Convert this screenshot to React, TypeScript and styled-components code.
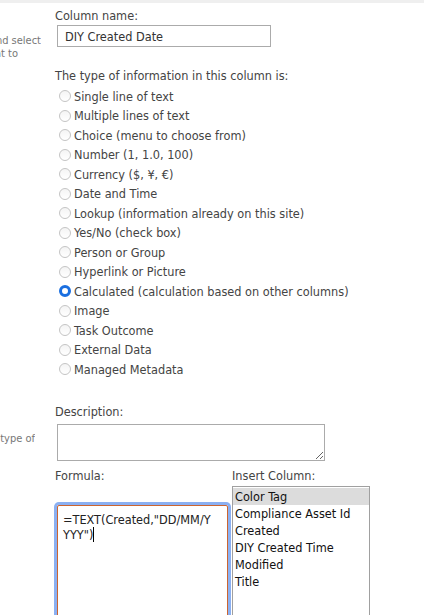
import React from 'react';
import styled, { createGlobalStyle } from 'styled-components';

const GlobalStyle = createGlobalStyle`
    html, body {
        margin: 0;
        padding: 0;
        background: #ffffff;
    }
    body {
        font-family: 'DejaVu Sans Condensed', 'DejaVu Sans', Tahoma, sans-serif;
        font-size: 12.6px;
        color: #444444;
        overflow: hidden;
    }
`;

const Page = styled.div`
    width: 424px;
    height: 615px;
    overflow: hidden;
`;
const TopBand = styled.div`
    height: 3px;
    background-color: #efefef;
`;
const Section = styled.div`
    display: grid;
    grid-template-columns: 55px 1fr;
    padding-top: ${(p: { $top: number }) => p.$top}px;
`;
const Side = styled.div`
    padding-top: ${(p: { $top: number }) => p.$top}px;
    font-size: 11px;
    line-height: 13px;
    color: #777777;
`;
const SideLine = styled.div<{ $end: number }>`
    width: ${(p) => p.$end}px;
    display: flex;
    justify-content: flex-end;
    overflow: hidden;
    white-space: nowrap;
`;
const Main = styled.div`
    display: flex;
    flex-direction: column;
`;
const Label = styled.div<{ $gap?: number }>`
    line-height: 16px;
    margin-top: ${(p) => p.$gap || 0}px;
    color: #444444;
    white-space: nowrap;
`;
const NameInput = styled.div`
    box-sizing: border-box;
    width: 214px;
    height: 22px;
    margin: 1px 0 0 2px;
    border: 1px solid #ababab;
    padding: 0 7px;
    line-height: 21px;
    color: #333333;
`;
const RadioList = styled.div`
    margin-top: 2px;
    display: flex;
    flex-direction: column;
`;
const RadioRow = styled.div`
    height: 19.5px;
    display: flex;
    align-items: center;
    white-space: nowrap;
    color: #444444;
    padding-top: 1px;
    box-sizing: border-box;
`;
const RadioDot = styled.span<{ $on?: boolean }>`
    box-sizing: border-box;
    width: 12px;
    height: 12px;
    margin: 0 3px 0 4px;
    border-radius: 50%;
    border: ${(p) => (p.$on ? '3.5px solid #1a6fe0' : '1px solid #c4c4c4')};
    background: ${(p) => (p.$on ? '#ffffff' : 'linear-gradient(#f4f4f4, #ffffff)')};
    flex: none;
`;
const DescBox = styled.textarea`
    box-sizing: border-box;
    display: block;
    width: 268px;
    height: 37px;
    margin: 4px 0 0 2px;
    border: 1px solid #ababab;
    border-radius: 0;
    padding: 2px 4px;
    font: inherit;
    outline: none;
`;
const FormulaRow = styled.div`
    margin-top: 7px;
    display: grid;
    grid-template-columns: 177px 1fr;
`;
const FormulaCol = styled.div`
    display: flex;
    flex-direction: column;
`;
const FormulaBox = styled.div`
    box-sizing: border-box;
    width: 171px;
    height: 140px;
    margin: 21px 0 0 2px;
    border: 1px solid #cc6530;
    border-radius: 2px;
    box-shadow: 0 0 0 3px #8bb0f2;
    padding: 6px 5px;
    line-height: 15px;
    color: #222222;
    white-space: pre;
`;
const Caret = styled.span`
    display: inline-block;
    width: 1px;
    height: 15px;
    vertical-align: top;
    background: #000000;
`;
const ListBox = styled.div`
    box-sizing: border-box;
    width: 138px;
    height: 150px;
    margin-top: 2px;
    border: 1px solid #a0a0a0;
    padding-top: 1px;
`;
const Option = styled.div<{ $selected?: boolean }>`
    height: 17px;
    line-height: 17px;
    padding-left: 2px;
    color: #111111;
    white-space: nowrap;
    background-color: ${(p) => (p.$selected ? '#dcdcdc' : 'transparent')};
`;

const types = [
    'Single line of text',
    'Multiple lines of text',
    'Choice (menu to choose from)',
    'Number (1, 1.0, 100)',
    'Currency ($, ¥, €)',
    'Date and Time',
    'Lookup (information already on this site)',
    'Yes/No (check box)',
    'Person or Group',
    'Hyperlink or Picture',
    'Calculated (calculation based on other columns)',
    'Image',
    'Task Outcome',
    'External Data',
    'Managed Metadata',
];

const columns = ['Color Tag', 'Compliance Asset Id', 'Created', 'DIY Created Time', 'Modified', 'Title'];

export default function App() {
    return (
        <Page>
            <GlobalStyle />
            <TopBand />
            <Section $top={0}>
                <Side $top={31}>
                    <SideLine $end={41}>Type a name for this column, and select</SideLine>
                    <SideLine $end={18}>the type of information you want to</SideLine>
                </Side>
                <Main>
                    <Label $gap={5}>Column name:</Label>
                    <NameInput>DIY Created Date</NameInput>
                    <Label $gap={21}>The type of information in this column is:</Label>
                    <RadioList>
                        {types.map((t, i) => (
                            <RadioRow key={i}>
                                <RadioDot $on={t.startsWith('Calculated')} />
                                {t}
                            </RadioRow>
                        ))}
                    </RadioList>
                </Main>
            </Section>
            <Section $top={25}>
                <Side $top={28}>
                    <SideLine $end={35}>Specify detailed options for the type of</SideLine>
                </Side>
                <Main>
                    <Label>Description:</Label>
                    <DescBox readOnly defaultValue="" />
                    <FormulaRow>
                        <FormulaCol>
                            <Label>Formula:</Label>
                            <FormulaBox>
                                {'=TEXT(Created,"DD/MM/Y\nYYY")'}
                                <Caret />
                            </FormulaBox>
                        </FormulaCol>
                        <FormulaCol>
                            <Label>Insert Column:</Label>
                            <ListBox>
                                {columns.map((c, i) => (
                                    <Option key={i} $selected={i === 0}>
                                        {c}
                                    </Option>
                                ))}
                            </ListBox>
                        </FormulaCol>
                    </FormulaRow>
                </Main>
            </Section>
        </Page>
    );
}
